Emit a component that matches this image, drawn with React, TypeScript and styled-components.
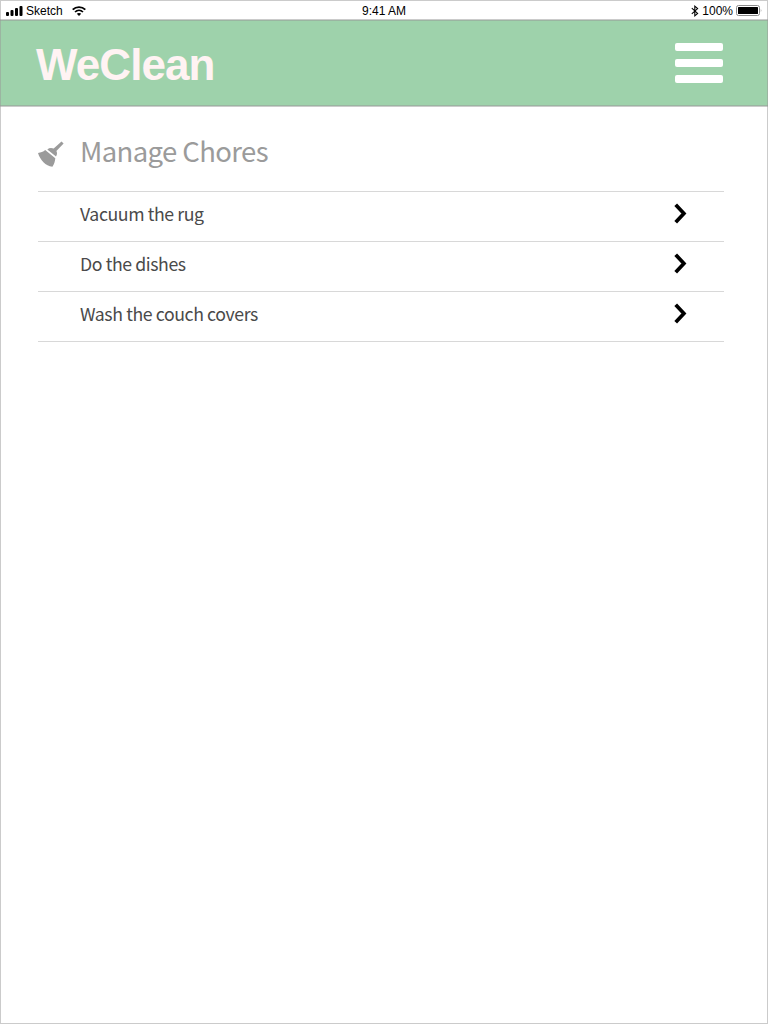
import React from "react";
import styled, { createGlobalStyle } from "styled-components";

const GlobalStyle = createGlobalStyle`
  * { box-sizing: border-box; }
  body { margin: 0; background: #fff; }
`;

const Screen = styled.div`
  position: relative;
  display: flex;
  flex-direction: column;
  width: 768px;
  height: 1024px;
  background: #fff;
  overflow: hidden;
  &::after {
    content: "";
    position: absolute;
    inset: 0;
    border: 1px solid rgba(151, 151, 151, 0.5);
    pointer-events: none;
  }
`;

const StatusBar = styled.div`
  display: grid;
  grid-template-columns: 1fr auto 1fr;
  align-items: center;
  height: 20px;
  padding: 1px 6px 0;
  border-bottom: 1px solid #cbcbcb;
  font: 12px/18px "Liberation Sans", Arial, sans-serif;
  color: #000;
`;

const StatusGroup = styled.div<{ $end?: boolean }>`
  display: flex;
  align-items: center;
  justify-content: ${(p) => (p.$end ? "flex-end" : "flex-start")};
`;

const StatusText = styled.span<{ $left?: number; $right?: number }>`
  margin: 1px ${(p) => p.$right ?? 0}px 0 ${(p) => p.$left ?? 0}px;
`;

const Header = styled.header`
  display: flex;
  align-items: center;
  justify-content: space-between;
  height: 87px;
  padding: 0 45px 0 36px;
  background: #9ed2ab;
  background-clip: padding-box;
  border-bottom: 1px solid #cbcbcb;
  box-shadow: inset 0 -1px #9ab5a1, inset 0 1px #9ab5a1;
`;

const Brand = styled.h1`
  margin: 4px 0 0;
  font: bold 44px/50px "Liberation Sans", Arial, sans-serif;
  letter-spacing: -0.95px;
  color: #fff3f3;
`;

const MenuButton = styled.button`
  display: flex;
  flex-direction: column;
  gap: 8px;
  padding: 0;
  border: 0;
  background: none;
`;

const MenuBar = styled.span`
  width: 48px;
  height: 8px;
  border-radius: 2px;
  background: #fff;
`;

const Content = styled.main`
  padding: 0 44px 0 38px;
  font-family: "Noto Sans CJK SC", "Noto Sans", sans-serif;
`;

const TitleRow = styled.div`
  display: flex;
  align-items: center;
  height: 84px;
  padding-top: 10px;
`;

const Title = styled.h2`
  margin: 0 0 8px 16px;
  font-size: 27.5px;
  line-height: 40px;
  font-weight: 400;
  letter-spacing: -0.62px;
  color: #9b9b9b;
`;

const ChoreList = styled.ul`
  margin: 0;
  padding: 0;
  list-style: none;
  border-top: 1px solid #d8d8d8;
`;

const Chore = styled.li`
  display: flex;
  align-items: center;
  justify-content: space-between;
  height: 50px;
  padding: 0 37px 6px 42px;
  border-bottom: 1px solid #d8d8d8;
  color: #4a4a4a;
`;

const ChoreName = styled.span`
  margin-bottom: 1px;
  font-size: 17.7px;
  line-height: 26px;
  letter-spacing: -0.4px;
`;

const Signal = () => (
  <svg width="17" height="10" viewBox="0 0 17 10">
    <rect x="0" y="6" width="3" height="4" rx="1" />
    <rect x="4.5" y="4" width="3" height="6" rx="1" />
    <rect x="9" y="2" width="3" height="8" rx="1" />
    <rect x="13.5" y="0" width="3" height="10" rx="1" />
  </svg>
);

const Wifi = () => (
  <svg width="14" height="10" viewBox="0 0 14 10" fill="none" stroke="#000">
    <path d="M0.7 3.7C4.2 0.2 9.8 0.2 13.3 3.7" strokeWidth="1.9" />
    <path d="M3 6C5.3 3.8 8.7 3.8 11 6" strokeWidth="1.7" />
    <path d="M7 10L4.8 7.8C6 6.6 8 6.6 9.2 7.8Z" fill="#000" stroke="none" />
  </svg>
);

const Bluetooth = () => (
  <svg width="8" height="12" viewBox="0 0 8 12" fill="none" stroke="#000" strokeWidth="1.1">
    <path d="M0.8 3.2L6.6 8.4L3.8 10.8V1.2L6.6 3.6L0.8 8.8" />
  </svg>
);

const Battery = () => (
  <svg width="26" height="11" viewBox="0 0 26 11">
    <rect x="0.5" y="0.5" width="23" height="10" rx="2" fill="none" stroke="#8c8c8c" />
    <rect x="2" y="2" width="20" height="7" rx="0.5" />
    <path d="M24.8 3.8Q26 5.5 24.8 7.2Z" fill="#8c8c8c" />
  </svg>
);

const Broom = () => (
  <svg width="26" height="26" viewBox="0 0 26 26" fill="#9b9b9b">
    <path d="M23.5 0.5L25.6 2.4L18.4 9.9C19.3 11.5 19.3 13.5 18 15.4L9.3 8.4C11.2 6.8 13.5 6.6 15.7 7.6Z" />
    <path d="M7.2 9.1L17.3 17.2C17 20.5 16.2 23.2 14.4 25.8C7.5 24.8 2.3 19.5 0 12.1C2.8 11.7 5.2 10.8 7.2 9.1Z" />
  </svg>
);

const Chevron = () => (
  <svg width="13" height="21" viewBox="0 0 13 21" fill="none" stroke="#000" strokeWidth="3.7">
    <path d="M1.7 1.7L9.9 10.5L1.7 19.3" />
  </svg>
);

const chores = ["Vacuum the rug", "Do the dishes", "Wash the couch covers"];

export default function App() {
  return (
    <Screen>
      <GlobalStyle />
      <StatusBar>
        <StatusGroup>
          <Signal />
          <StatusText $left={3} $right={9}>Sketch</StatusText>
          <Wifi />
        </StatusGroup>
        <StatusText>9:41 AM</StatusText>
        <StatusGroup $end>
          <Bluetooth />
          <StatusText $left={3} $right={3}>100%</StatusText>
          <Battery />
        </StatusGroup>
      </StatusBar>
      <Header>
        <Brand>WeClean</Brand>
        <MenuButton aria-label="Menu">
          <MenuBar />
          <MenuBar />
          <MenuBar />
        </MenuButton>
      </Header>
      <Content>
        <TitleRow>
          <Broom />
          <Title>Manage Chores</Title>
        </TitleRow>
        <ChoreList>
          {chores.map((name) => (
            <Chore key={name}>
              <ChoreName>{name}</ChoreName>
              <Chevron />
            </Chore>
          ))}
        </ChoreList>
      </Content>
    </Screen>
  );
}
